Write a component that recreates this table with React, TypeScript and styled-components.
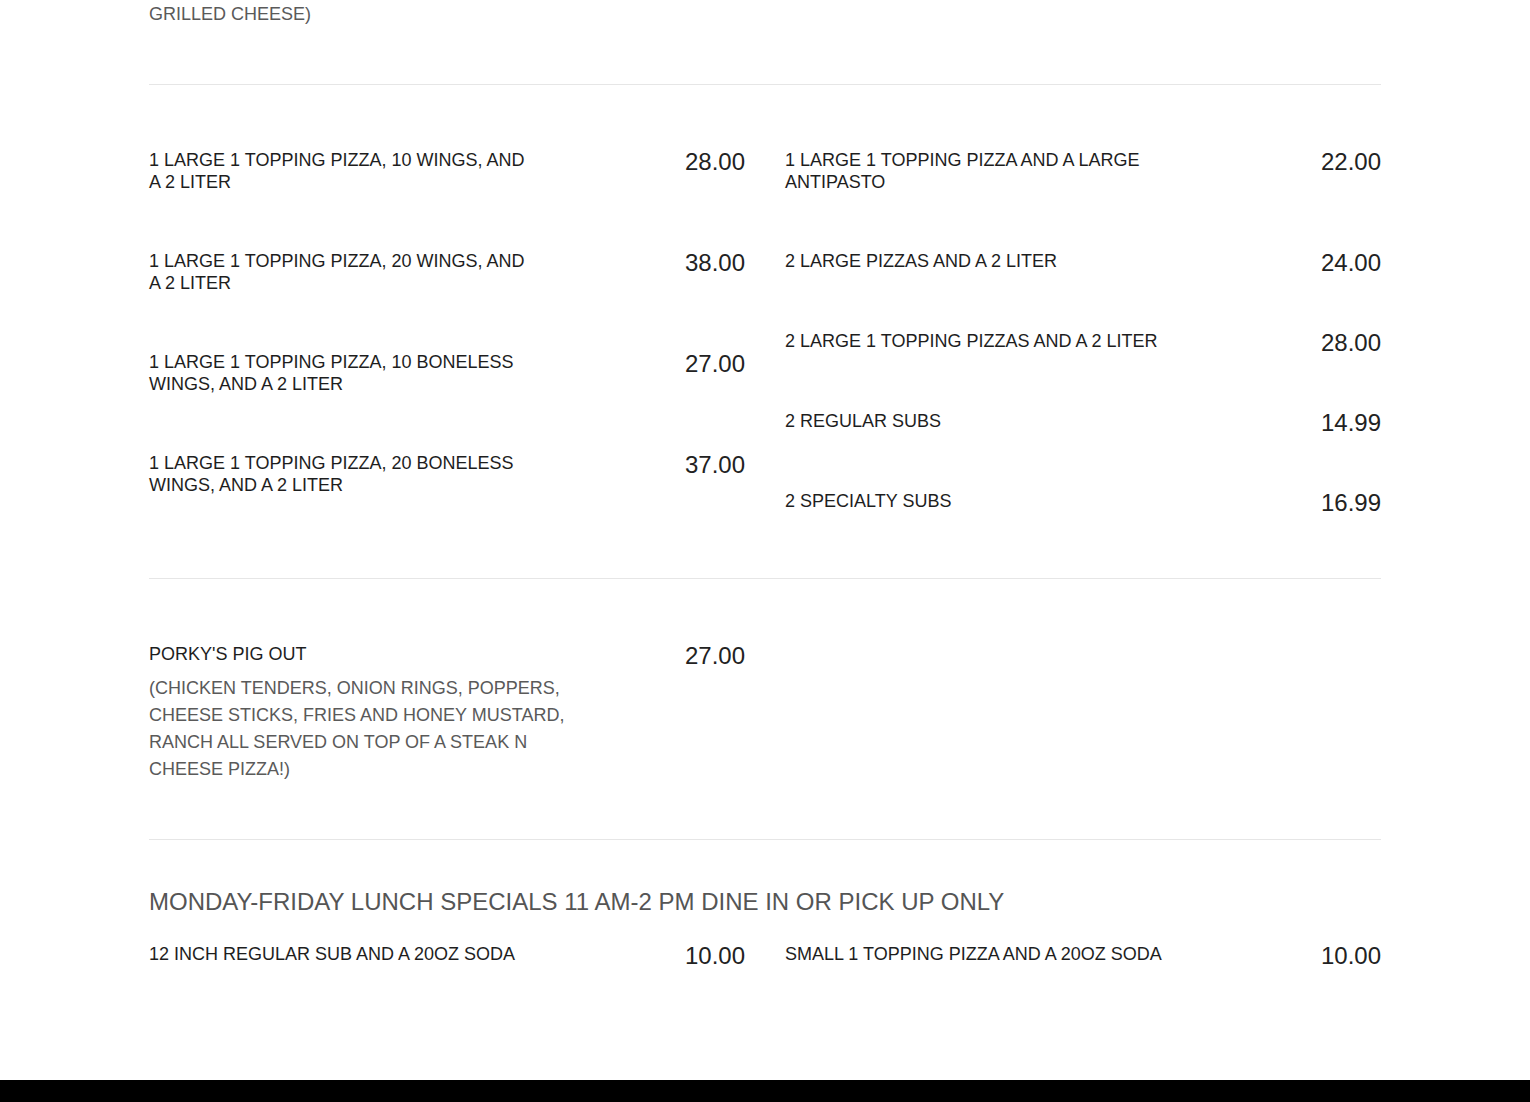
import React from "react";
import styled, { createGlobalStyle } from "styled-components";

const Global = createGlobalStyle`
  html, body { margin: 0; padding: 0; background: #fff; }
  body { font-family: "Liberation Sans", Arial, sans-serif; color: #222; }
`;

const Page = styled.main`
  width: 1232px;
  margin: 0 auto;
`;

const Section = styled.section<{ $top?: number; $bottom?: number; $border?: boolean }>`
  padding-top: ${(p) => p.$top ?? 0}px;
  padding-bottom: ${(p) => p.$bottom ?? 0}px;
  border-bottom: ${(p) => (p.$border === false ? "none" : "1px solid #e6e6e6")};
`;

const Grid = styled.div`
  display: grid;
  grid-template-columns: 1fr 1fr;
  column-gap: 40px;
  align-items: start;
`;

const Column = styled.div`
  display: flex;
  flex-direction: column;
`;

const Item = styled.div<{ $pad?: number }>`
  display: flex;
  justify-content: space-between;
  align-items: flex-start;
  padding-bottom: ${(p) => p.$pad ?? 58}px;
`;

const Info = styled.div`
  display: flex;
  flex-direction: column;
`;

const Name = styled.div`
  max-width: 385px;
  font-size: 18px;
  line-height: 21.5px;
  color: #1e1e1e;
  text-transform: uppercase;
`;

const Desc = styled.div<{ $gap?: number }>`
  max-width: 430px;
  margin-top: ${(p) => p.$gap ?? 0}px;
  font-size: 18px;
  line-height: 27px;
  color: #5a5a5a;
  text-transform: uppercase;
`;

const Price = styled.div`
  flex-shrink: 0;
  padding-top: 1px;
  font-size: 24px;
  line-height: 21px;
  color: #222;
`;

const Heading = styled.h2`
  margin: 0 0 27px;
  font-size: 24px;
  font-weight: 400;
  line-height: 30px;
  color: #555;
  text-transform: uppercase;
`;

const Footer = styled.footer`
  height: 22px;
  background: #000;
`;

type MenuItem = { name: string; price: string; desc?: string };

const leftCombos: MenuItem[] = [
  { name: "1 Large 1 Topping Pizza, 10 Wings, and a 2 Liter", price: "28.00" },
  { name: "1 Large 1 Topping Pizza, 20 Wings, and a 2 Liter", price: "38.00" },
  { name: "1 Large 1 Topping Pizza, 10 Boneless Wings, and a 2 Liter", price: "27.00" },
  { name: "1 Large 1 Topping Pizza, 20 Boneless Wings, and a 2 Liter", price: "37.00" },
];

const rightCombos: MenuItem[] = [
  { name: "1 Large 1 Topping Pizza and a Large Antipasto", price: "22.00" },
  { name: "2 Large Pizzas and a 2 Liter", price: "24.00" },
  { name: "2 Large 1 Topping Pizzas and a 2 Liter", price: "28.00" },
  { name: "2 Regular Subs", price: "14.99" },
  { name: "2 Specialty Subs", price: "16.99" },
];

const MenuRow = ({ item, pad }: { item: MenuItem; pad?: number }) => (
  <Item $pad={pad}>
    <Info>
      <Name>{item.name}</Name>
      {item.desc && <Desc $gap={9}>{item.desc}</Desc>}
    </Info>
    <Price>{item.price}</Price>
  </Item>
);

export default function App() {
  return (
    <>
      <Global />
      <Page>
        <Section $top={1} $bottom={56}>
          <Desc>Grilled Cheese)</Desc>
        </Section>

        <Section $top={65} $bottom={7}>
          <Grid>
            <Column>
              {leftCombos.map((it) => (
                <MenuRow key={it.name} item={it} />
              ))}
            </Column>
            <Column>
              {rightCombos.map((it) => (
                <MenuRow key={it.name} item={it} />
              ))}
            </Column>
          </Grid>
        </Section>

        <Section $top={65}>
          <Grid>
            <Column>
              <MenuRow
                pad={56}
                item={{
                  name: "Porky's Pig Out",
                  price: "27.00",
                  desc: "(Chicken Tenders, Onion Rings, Poppers, Cheese Sticks, Fries and Honey Mustard, Ranch all served on top of a Steak N Cheese Pizza!)",
                }}
              />
            </Column>
            <Column />
          </Grid>
        </Section>

        <Section $top={47} $bottom={56} $border={false}>
          <Heading>Monday-Friday Lunch Specials 11 AM-2 PM Dine in or Pick up Only</Heading>
          <Grid>
            <Column>
              <MenuRow item={{ name: "12 Inch Regular Sub and a 20oz Soda", price: "10.00" }} />
            </Column>
            <Column>
              <MenuRow item={{ name: "Small 1 Topping Pizza and a 20oz Soda", price: "10.00" }} />
            </Column>
          </Grid>
        </Section>
      </Page>
      <Footer />
    </>
  );
}
